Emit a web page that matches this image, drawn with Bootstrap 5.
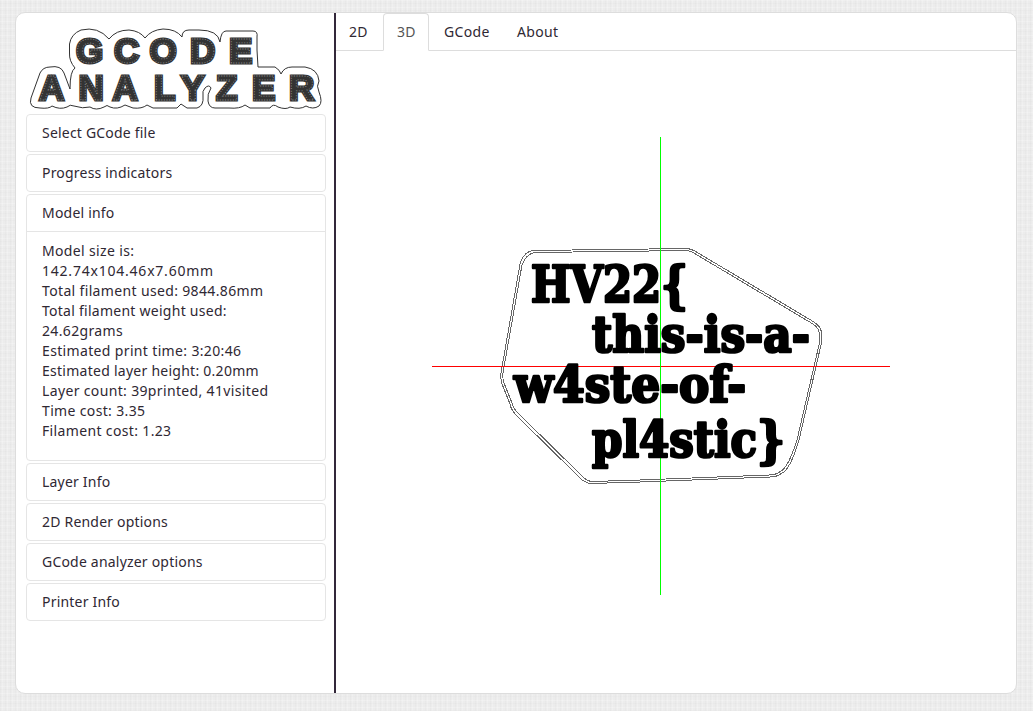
<!DOCTYPE html>
<html lang="en">
<head>
<meta charset="utf-8">
<title>GCode Analyzer</title>
<link href="https://cdn.jsdelivr.net/npm/bootstrap@5.3.0/dist/css/bootstrap.min.css" rel="stylesheet">
<style>
body{height:711px;overflow:hidden;font:14px/20px "Noto Sans",sans-serif;letter-spacing:.35px;color:#2f2833;
 background:repeating-linear-gradient(0deg,rgba(0,0,0,.012) 0 1px,transparent 1px 3px,rgba(255,255,255,.2) 3px 4px,transparent 4px 7px),repeating-linear-gradient(90deg,rgba(0,0,0,.014) 0 1px,transparent 1px 2px,rgba(255,255,255,.2) 2px 3px,transparent 3px 5px) #ececec}
.workspace{width:1002px;height:682px;margin:12px 0 0 15px;border:1px solid #ddd;border-radius:10px}
.sidebar{width:320px;border-right:2px solid #33283a;padding:0 8px 0 10px}
.logo{height:101px;margin-left:-10px}
.panel-stack{gap:2px}
.panel-stack .accordion-item{border:1px solid #e5e5e5;border-radius:4px;background:#fff;color:inherit}
.panel-head{height:36px;padding:8px 15px;letter-spacing:.2px}
.panel-info{height:229px;border-top:1px solid #e5e5e5;padding:9px 15px}
.dims{letter-spacing:.78px}.snug{letter-spacing:.26px}
.nav-tabs{height:38px;border-color:#ddd;gap:2px;--bs-nav-tabs-border-radius:4px}
.nav-tabs .nav-item:first-child{margin-left:-1px}
.nav-tabs .nav-link{padding:8px 11px 8px 13px;height:38px;color:#2f2833;white-space:nowrap}
.nav-tabs .nav-link.active{color:#555;border-color:#ddd #ddd #fff}
.nav-tabs .w-a{width:46px}.nav-tabs .w-b{width:71px;padding-left:12px}.nav-tabs .w-c{width:70px;padding-left:12px}
.logo text{font:bold 35px "Liberation Sans",sans-serif;letter-spacing:0}
.plot text{font:bold 51px "DejaVu Serif Condensed","DejaVu Serif",serif;letter-spacing:0;stroke:#000;stroke-width:2.6;stroke-linejoin:round}
</style>
</head>
<body>
<div class="workspace d-flex bg-white overflow-hidden">
<aside class="sidebar d-flex flex-column flex-shrink-0">
<svg class="logo flex-shrink-0" width="318" height="101" viewBox="16 13 318 101" role="img" aria-label="GCode Analyzer">
<path fill="#fff" stroke="#333" stroke-width="1" stroke-linejoin="round" d="M75 68Q69 61 69.500 53V44Q71 34 81 30Q98 26 109 39Q116 30 129 30Q140 31 145 38Q151 30 163 29Q176 29 182 37Q182 30 189 30H199Q218 30 220 42Q221 31 226 31H253Q258 31 257 37V50L258 67H275Q280 70 281 74Q284 67 292 67H305Q318 69 319 81Q316 86 319 92Q323 102 319 106Q313 110 306 106Q300 110 290 107Q286 110 278 107Q273 103 270 108H250L245 105Q240 109 229 108H215Q209 108 208 101Q207 94 211 88Q209 84 205 88Q202 91 203 96Q204 106 197 108H187L181 104L177 108H153L147 105Q142 109 133 108L125 105Q117 110 110 107Q107 104 104 107Q96 111 90 107Q83 109 74 106Q70 104 67 107Q60 110 52 106Q49 109 40 108Q28 108 31 98L40 73Q43 67 50 67Q61 65 64 73L70 89Q70 71 75 68Z"/>
<g fill="#333" stroke="#333" stroke-width="3"><text y="62.500" x="76 114 149.500 190 229">GCODE</text><text y="99.500" x="39 78.500 112.500 154 181 216 252 289">ANALYZER</text></g>
<g fill="none" stroke="#999" stroke-width=".8" stroke-dasharray="1 1.600"><text y="62.500" x="76 114 149.500 190 229" aria-hidden="true">GCODE</text><text y="99.500" x="39 78.500 112.500 154 181 216 252 289" aria-hidden="true">ANALYZER</text></g>
</svg>
<div class="accordion panel-stack d-flex flex-column">
<div class="accordion-item"><div class="panel-head">Select GCode file</div></div>
<div class="accordion-item"><div class="panel-head">Progress indicators</div></div>
<div class="accordion-item"><div class="panel-head">Model info</div>
<div class="panel-info">Model size is:<br><span class="dims">142.74x104.46x7.60mm</span><br>Total filament used: 9844.86mm<br><span class="snug">Total filament weight used:</span><br>24.62grams<br>Estimated print time: 3:20:46<br><span class="snug">Estimated layer height: 0.20mm</span><br>Layer count: 39printed, 41visited<br>Time cost: 3.35<br>Filament cost: 1.23</div></div>
<div class="accordion-item"><div class="panel-head">Layer Info</div></div>
<div class="accordion-item"><div class="panel-head">2D Render options</div></div>
<div class="accordion-item"><div class="panel-head">GCode analyzer options</div></div>
<div class="accordion-item"><div class="panel-head">Printer Info</div></div>
</div>
</aside>
<main class="flex-grow-1">
<ul class="nav nav-tabs flex-nowrap">
<li class="nav-item"><a class="nav-link w-a">2D</a></li>
<li class="nav-item"><a class="nav-link active w-a">3D</a></li>
<li class="nav-item"><a class="nav-link w-b">GCode</a></li>
<li class="nav-item"><a class="nav-link w-c">About</a></li>
</ul>
<svg class="plot d-block" width="680" height="642" viewBox="336 51 680 642">
<g fill="none" stroke="#666" shape-rendering="crispEdges">
<path d="M534 250.500L688 248.500L694 250.500L814 322Q822 327 821.500 335L821 345L799 440Q790 470 782 473Q777 477 770 477L640 482L591 483.500Q585 483 580 478L517 416Q511 410 510 404L502 384Q500 378 501.500 370L520 264Q524 251 534 250.500Z"/>
<path d="M535 252.500L688 250.500L693 252.500L813 324Q820 329 819.500 336L819 345L797 440Q788 468 781 471Q776 475 769 475L640 480L592 481.500Q587 481 583 477L520 415Q513 409 512 403L504 383Q502 378 503.500 370L522 265Q526 254 535 252.500Z"/>
</g>
<path d="M432 366.500H890" stroke="#f00"/><path d="M660.500 137V595" stroke="#0f0"/>
<text x="531" y="302" textLength="157" lengthAdjust="spacingAndGlyphs">HV22{</text>
<text x="592" y="352" textLength="218" lengthAdjust="spacingAndGlyphs">this-is-a-</text>
<text x="514" y="402" textLength="232" lengthAdjust="spacingAndGlyphs">w4ste-of-</text>
<text x="592" y="457" textLength="193" lengthAdjust="spacingAndGlyphs">pl4stic}</text>
</svg>
</main>
</div>
<script src="https://cdn.jsdelivr.net/npm/bootstrap@5.3.0/dist/js/bootstrap.bundle.min.js"></script>
</body>
</html>
